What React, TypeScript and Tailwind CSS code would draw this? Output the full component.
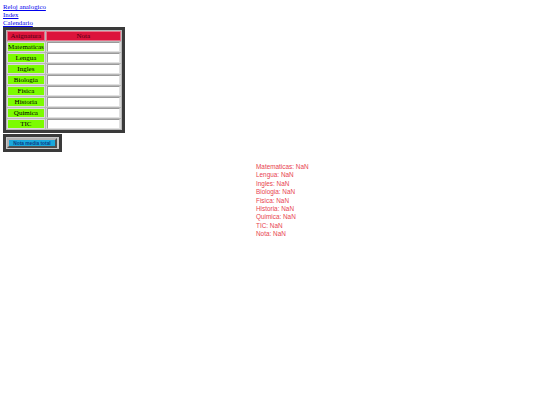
const materias = ["Matematicas", "Lengua", "Ingles", "Biologia", "Fisica", "Historia", "Quimica", "TIC"];

export default function App() {
  return (
    <div className="relative w-[540px] h-[405px] bg-white" style={{ fontFamily: '"Liberation Serif", serif' }}>
      <div className="pl-[3px] pt-[3px] flex flex-col text-[6.8px] leading-[8px]">
        <a href="#" className="text-[#0000ee] underline w-fit">Reloj analogico</a>
        <a href="#" className="text-[#0000ee] underline w-fit">Index</a>
        <a href="#" className="text-[#0000ee] underline w-fit">Calendario</a>
      </div>

      <table className="ml-[3px] border-[3px] border-[#3a3a3a] border-separate border-spacing-[1.5px] bg-[#b8b8b8] text-[7px] leading-[8px]">
        <thead>
          <tr>
            <th className="w-[36px] h-[10px] p-0 font-normal bg-[#dc143c] border border-[#e87088] text-[#4a0010]">Asignatura</th>
            <th className="w-[75px] h-[10px] p-0 font-normal bg-[#dc143c] border border-[#e87088] text-[#4a0010]">Nota</th>
          </tr>
        </thead>
        <tbody>
          {materias.map((m) => (
            <tr key={m}>
              <td className="h-[10px] p-0 text-center bg-[#7cfc00] border border-[#dadada] text-black whitespace-nowrap">{m}</td>
              <td className="h-[10px] p-0 bg-[#d8d8d8]">
                <div className="h-[9.5px] mx-[1px] bg-white border border-[#9a9a9a] border-b-[#e0e0e0] border-r-[#e0e0e0]" />
              </td>
            </tr>
          ))}
        </tbody>
      </table>

      <div className="ml-[3px] mt-[1px] w-[59px] h-[18px] border-[3px] border-[#3a3a3a] bg-[#c8c8c8] flex items-center pl-[1px]">
        <div
          className="w-[50px] h-[10px] bg-[#1aa8dc] border-2 border-[#b0b0b0] border-r-[#505050] border-b-[#505050] flex items-center justify-center text-[4.8px] leading-[5px] font-bold text-[#0a3a80] whitespace-nowrap"
          style={{ fontFamily: '"Liberation Sans", sans-serif' }}
        >
          Nota media total
        </div>
      </div>

      <div
        className="absolute left-[256px] top-[163px] flex flex-col text-[6.4px] leading-[8.4px] text-[#e8434f]"
        style={{ fontFamily: '"Liberation Sans", sans-serif' }}
      >
        {materias.map((m) => (
          <span key={m}>{m}: NaN</span>
        ))}
        <span>Nota: NaN</span>
      </div>
    </div>
  );
}
